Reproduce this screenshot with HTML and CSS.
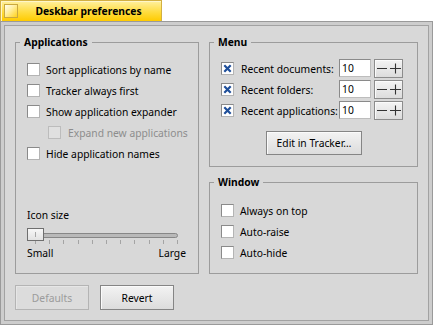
FILE: index.html
```html
<!DOCTYPE html>
<html>
<head>
<meta charset="utf-8">
<title>Deskbar preferences</title>
<link rel="stylesheet" href="styles.css">
</head>
<body>
<div class="tab"><span class="close"></span><span class="title">Deskbar preferences</span></div>
<div class="window">
  <div class="content">
    <div class="columns">
      <fieldset class="box apps">
        <legend>Applications</legend>
        <div class="apps-inner">
          <div class="check-list">
            <label class="check"><span class="cb"></span>Sort applications by name</label>
            <label class="check"><span class="cb"></span>Tracker always first</label>
            <label class="check"><span class="cb"></span>Show application expander</label>
            <label class="check sub disabled"><span class="cb"></span>Expand new applications</label>
            <label class="check"><span class="cb"></span>Hide application names</label>
          </div>
          <div class="icon-size">
            <div class="slider-label">Icon size</div>
            <div class="slider">
              <div class="rail"><div class="track"></div><div class="thumb"><i></i></div></div>
              <div class="ticks"><i></i><i></i><i></i><i></i><i></i><i></i><i></i><i></i><i></i><i></i><i></i></div>
            </div>
            <div class="slider-ends"><span>Small</span><span>Large</span></div>
          </div>
        </div>
      </fieldset>
      <div class="right-col">
        <fieldset class="box menu">
          <legend>Menu</legend>
          <div class="menu-inner">
            <div class="recent-row">
              <span class="cb checked"><svg width="11" height="11" viewBox="0 0 11 11"><path d="M2.3 2.3L8.7 8.7M8.7 2.3L2.3 8.7" stroke="#1f4f9a" stroke-width="2.2" fill="none"/></svg></span>
              <span class="recent-label">Recent documents:</span>
              <span class="num">10</span>
              <span class="spin"><svg width="27" height="17" viewBox="0 0 27 17"><path d="M2 8.5H12M15 8.5H26M20.5 3.5V13.5" stroke="#333" stroke-width="1.1" fill="none"/></svg></span>
            </div>
            <div class="recent-row">
              <span class="cb checked"><svg width="11" height="11" viewBox="0 0 11 11"><path d="M2.3 2.3L8.7 8.7M8.7 2.3L2.3 8.7" stroke="#1f4f9a" stroke-width="2.2" fill="none"/></svg></span>
              <span class="recent-label">Recent folders:</span>
              <span class="num">10</span>
              <span class="spin"><svg width="27" height="17" viewBox="0 0 27 17"><path d="M2 8.5H12M15 8.5H26M20.5 3.5V13.5" stroke="#333" stroke-width="1.1" fill="none"/></svg></span>
            </div>
            <div class="recent-row">
              <span class="cb checked"><svg width="11" height="11" viewBox="0 0 11 11"><path d="M2.3 2.3L8.7 8.7M8.7 2.3L2.3 8.7" stroke="#1f4f9a" stroke-width="2.2" fill="none"/></svg></span>
              <span class="recent-label">Recent applications:</span>
              <span class="num">10</span>
              <span class="spin"><svg width="27" height="17" viewBox="0 0 27 17"><path d="M2 8.5H12M15 8.5H26M20.5 3.5V13.5" stroke="#333" stroke-width="1.1" fill="none"/></svg></span>
            </div>
            <button class="btn edit">Edit in Tracker…</button>
          </div>
        </fieldset>
        <fieldset class="box win">
          <legend>Window</legend>
          <div class="win-inner">
            <label class="check"><span class="cb"></span>Always on top</label>
            <label class="check"><span class="cb"></span>Auto-raise</label>
            <label class="check"><span class="cb"></span>Auto-hide</label>
          </div>
        </fieldset>
      </div>
    </div>
    <div class="buttons">
      <button class="btn disabled">Defaults</button>
      <button class="btn">Revert</button>
    </div>
  </div>
</div>
</body>
</html>
```

FILE: styles.css
```css
html, body {
  margin: 0;
  padding: 0;
}
body {
  width: 433px;
  height: 325px;
  overflow: hidden;
  background: #ffffff;
  font-family: "Noto Sans", "DejaVu Sans", sans-serif;
  font-size: 10.3px;
  color: #000;
}

/* window tab */
.tab {
  width: 162px;
  height: 21px;
  box-sizing: border-box;
  border: 1px solid #d2b042;
  border-bottom: none;
  background: linear-gradient(#fff0a0, #ffdc40 55%, #ffcb00);
  box-shadow: inset 1px 1px 0 #fff6c8;
  display: flex;
  align-items: center;
}
.close {
  width: 14px;
  height: 14px;
  margin-left: 3px;
  box-sizing: border-box;
  border: 1px solid #c9a840;
  background: linear-gradient(135deg, #fffdf0 0%, #fff0a8 40%, #ffd21a 100%);
  flex: none;
}
.title {
  flex: 1;
  text-align: center;
  font-weight: bold;
  padding-right: 2px;
}

/* window frame */
.window {
  height: 304px;
  box-sizing: border-box;
  border: 1px solid #9a9a9a;
  background: #cdcdcd;
  padding: 3px;
}
.content {
  height: 100%;
  box-sizing: border-box;
  border: 1px solid #a2a2a2;
  background: #d8d8d8;
  padding: 9px 10px 10px;
  display: flex;
  flex-direction: column;
}
.columns {
  display: flex;
  gap: 10px;
}

/* boxes */
.box {
  margin: 0;
  padding: 0;
  border: 1px solid #9c9c9c;
  min-width: 0;
  box-sizing: border-box;
}
.box legend {
  padding: 0 4px;
  margin-left: 4px;
  font-weight: bold;
  line-height: 14px;
  height: 14px;
}
.apps {
  width: 184px;
  display: flex;
  flex-direction: column;
}
.apps-inner {
  flex: 1;
  display: flex;
  flex-direction: column;
  padding: 10px 12px 13px 11px;
}
.right-col {
  width: 209px;
  display: flex;
  flex-direction: column;
  gap: 8px;
}

/* checkboxes */
.check {
  display: flex;
  align-items: center;
  gap: 6px;
  height: 21px;
  white-space: nowrap;
}
.check.sub {
  padding-left: 21px;
  gap: 7px;
}
.cb {
  width: 13px;
  height: 13px;
  box-sizing: border-box;
  border: 1px solid;
  border-color: #8a8a8a #b4b4b4 #b4b4b4 #8a8a8a;
  background: #fff;
  flex: none;
  display: flex;
  align-items: center;
  justify-content: center;
}
.check.disabled {
  color: #8d8d8d;
}
.check.disabled .cb {
  background: #e0e0e0;
  border-color: #bcbcbc;
}

/* slider */
.icon-size {
  margin-top: auto;
}
.slider-label {
  line-height: 14px;
}
.slider {
  padding-top: 6px;
  padding-bottom: 2px;
}
.rail {
  position: relative;
  height: 13px;
  margin-right: 8px;
  display: flex;
  align-items: center;
}
.track {
  flex: 1;
  height: 5px;
  box-sizing: border-box;
  border: 1px solid #878787;
  border-radius: 0 3px 3px 0;
  background: #b9b9b9;
  margin-top: 1px;
}
.thumb {
  position: absolute;
  left: 0;
  top: 0;
  width: 17px;
  height: 13px;
  box-sizing: border-box;
  border: 1px solid #6f6f6f;
  background: linear-gradient(#f7f7f7, #e2e2e2);
  display: flex;
  justify-content: center;
  align-items: center;
}
.thumb i {
  width: 1px;
  height: 5px;
  background: #a8a8a8;
}
.ticks {
  display: flex;
  justify-content: space-between;
  height: 4px;
  margin: -1px 8px 0 8px;
}
.ticks i {
  width: 1px;
  height: 4px;
  background: #a4a4a4;
}
.slider-ends {
  display: flex;
  justify-content: space-between;
  line-height: 14px;
}

/* menu box */
.menu-inner {
  padding: 10px 14px 11px 11px;
  display: flex;
  flex-direction: column;
  gap: 2px;
}
.recent-row {
  display: flex;
  align-items: center;
  height: 19px;
}
.recent-row .cb {
  margin-right: 7px;
}
.recent-label {
  width: 98px;
  white-space: nowrap;
}
.num {
  width: 32px;
  height: 18px;
  box-sizing: border-box;
  border: 1px solid;
  border-color: #8a8a8a #bdbdbd #bdbdbd #8a8a8a;
  background: #fff;
  padding-left: 2px;
  line-height: 16px;
  align-self: flex-start;
}
.spin {
  width: 29px;
  height: 19px;
  margin-left: 3px;
  box-sizing: border-box;
  border: 1px solid #8c8c8c;
  background: linear-gradient(#f4f4f4, #dcdcdc);
  box-shadow: inset 1px 1px 0 #fbfbfb;
  display: flex;
}
.btn {
  font: inherit;
  color: #000;
  box-sizing: border-box;
  border: 1px solid #858585;
  background: linear-gradient(#f3f3f3, #dcdcdc);
  box-shadow: inset 1px 1px 0 #fbfbfb;
  padding: 0;
  margin: 0;
  border-radius: 0;
  text-align: center;
}
.btn.edit {
  width: 96px;
  height: 24px;
  margin-top: 9px;
  align-self: center;
  margin-left: 4px;
}

/* window box */
.win-inner {
  padding: 11px 11px 10px 11px;
}

/* bottom buttons */
.buttons {
  display: flex;
  gap: 11px;
  margin-top: 11px;
}
.buttons .btn {
  width: 74px;
  height: 25px;
}
.btn.disabled {
  color: #9b9b9b;
  border-color: #b4b4b4;
  background: #dcdcdc;
  box-shadow: inset 1px 1px 0 #e6e6e6;
}
```
